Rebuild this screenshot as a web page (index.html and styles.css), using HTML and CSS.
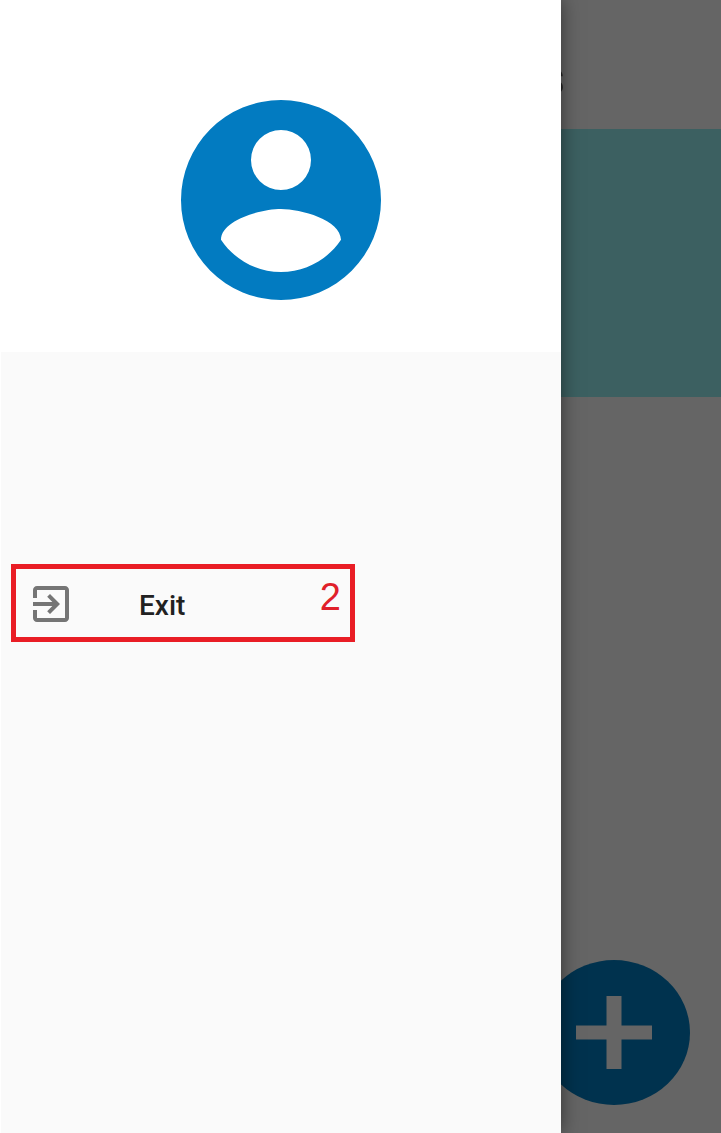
FILE: index.html
```html
<!DOCTYPE html>
<html lang="en">
<head>
<meta charset="utf-8">
<title>Navigation drawer</title>
<link rel="stylesheet" href="styles.css">
</head>
<body>
<div class="screen">
  <main class="page">
    <header class="page-header"><span class="page-title">s</span></header>
    <section class="banner"></section>
    <svg class="fab" viewBox="0 0 152 145" preserveAspectRatio="none">
      <ellipse cx="76" cy="72.5" rx="76" ry="72.5" fill="#00324e"/>
      <path d="M68.5 36h15v29.5h30.5v14h-30.5v29.5h-15v-29.5h-30.5v-14h30.5z" fill="#656565"/>
    </svg>
  </main>
  <nav class="drawer">
    <div class="profile">
      <svg class="avatar" viewBox="2 2 20 20">
        <path fill="#027bc1" fill-rule="evenodd" d="M12 2a10 10 0 1 0 0 20a10 10 0 1 0 0-20zM12 5a3 3 0 1 1 0 6a3 3 0 1 1 0-6zM12 19.2c-2.5 0-4.71-1.28-6-3.22.03-1.99 4-3.08 6-3.08 1.99 0 5.97 1.09 6 3.08-1.29 1.94-3.5 3.22-6 3.22z"/>
      </svg>
    </div>
    <div class="menu">
      <div class="item">
        <svg class="item-icon" viewBox="3 3 18 18">
          <path fill="#757575" d="M10.09 15.59L11.5 17l5-5-5-5-1.41 1.41L12.67 11H3v2h9.67l-2.58 2.59zM19 3H5c-1.11 0-2 .9-2 2v4h2V5h14v14H5v-4H3v4c0 1.1.89 2 2 2h14c1.1 0 2-.9 2-2V5c0-1.1-.9-2-2-2z"/>
        </svg>
        <span class="item-label">Exit</span>
        <span class="item-number">2</span>
      </div>
    </div>
  </nav>
</div>
</body>
</html>
```
FILE: styles.css
```css
* { box-sizing: border-box; }
body { margin: 0; }
.screen {
  position: relative;
  width: 721px;
  height: 1133px;
  overflow: hidden;
  background: #656565;
}
.page {
  display: flex;
  flex-direction: column;
  height: 100%;
}
.page-header {
  display: flex;
  justify-content: flex-end;
  height: 129px;
  padding: 51px 156px 0 0;
}
.page-title {
  font: 500 50px/54px Roboto, sans-serif;
  color: #242424;
}
.banner {
  height: 268px;
  background: #3c6061;
}
.fab {
  width: 152px;
  height: 145px;
  margin: auto 31px 28px auto;
}
.drawer {
  position: absolute;
  inset: 0 160px 0 0;
  display: flex;
  flex-direction: column;
  background: #fff;
  box-shadow: 0 0 18px rgba(0, 0, 0, .5);
}
.profile {
  display: flex;
  justify-content: center;
  height: 352px;
  padding: 100px 0 0 1px;
}
.avatar {
  width: 200px;
  height: 200px;
}
.menu {
  flex: 1;
  margin-left: 1px;
  padding: 212px 0 0 10px;
  background: #fafafa;
}
.item {
  display: flex;
  align-items: flex-start;
  width: 344px;
  height: 78px;
  padding: 0 9px 0 17px;
  border: 5px solid #e91d25;
}
.item-icon {
  width: 36px;
  height: 36px;
  margin-top: 17px;
}
.item-label {
  margin: 20px 0 0 70px;
  font: 500 28px/33px Roboto, sans-serif;
  color: #212121;
}
.item-number {
  margin: 6px 0 0 auto;
  font: 38px/44px "Liberation Sans", Arial, sans-serif;
  color: #e0202a;
}
```
